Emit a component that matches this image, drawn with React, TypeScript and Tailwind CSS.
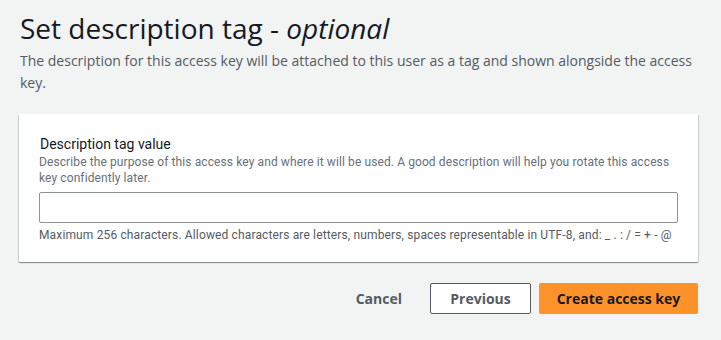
export default function App() {
  return (
    <div
      className="min-h-[340px] w-full bg-[#f2f3f3] pl-[19px] pr-[23px] pt-[10px] text-[#16191f]"
      style={{ fontFamily: '"Open Sans", "Noto Sans", Arial, sans-serif' }}
    >
      <h1 className="pl-[1px] text-[28px] leading-[36px] font-normal">
        Set description tag - <i>optional</i>
      </h1>
      <p className="mt-[4px] pl-[1px] text-[14px] leading-[22px] text-[#545b64]">
        The description for this access key will be attached to this user as a tag and shown alongside the access key.
      </p>
      <div
        className="mt-[20px] rounded-[1px] bg-white px-[20px] pt-[20px] pb-[19px] shadow-[0_1px_1px_0_rgba(0,28,36,0.3),1px_1px_1px_0_rgba(0,28,36,0.15),-1px_1px_1px_0_rgba(0,28,36,0.15)]"
        style={{ fontFamily: 'Roboto, "Open Sans", Arial, sans-serif' }}
      >
        <div className="pl-[1px] text-[14px] leading-[20px] text-[#16191f]">Description tag value</div>
        <div className="text-[12px] leading-[16px] tracking-[0.1px] text-[#687078]">
          Describe the purpose of this access key and where it will be used. A good description will help you rotate this access key confidently later.
        </div>
        <input
          type="text"
          className="mt-[6px] block h-[31px] w-full rounded-[2px] border border-[#879596] bg-white px-[8px] text-[14px] outline-none"
        />
        <div className="mt-[4px] text-[12px] leading-[16px] tracking-[0.14px] text-[#545b64]">
          Maximum 256 characters. Allowed characters are letters, numbers, spaces representable in UTF-8, and: _ . : / = + - @
        </div>
      </div>
      <div className="mt-[21px] flex items-center justify-end gap-[8px]">
        <button className="h-[31px] px-[20px] text-[14px] font-bold text-[#545b64]">Cancel</button>
        <button className="h-[31px] w-[101px] rounded-[2px] border border-[#545b64] bg-white text-[14px] font-bold text-[#545b64]">
          Previous
        </button>
        <button className="h-[31px] w-[159px] rounded-[2px] bg-[#fd922b] text-[14px] font-bold text-[#16191f]">
          Create access key
        </button>
      </div>
    </div>
  );
}
